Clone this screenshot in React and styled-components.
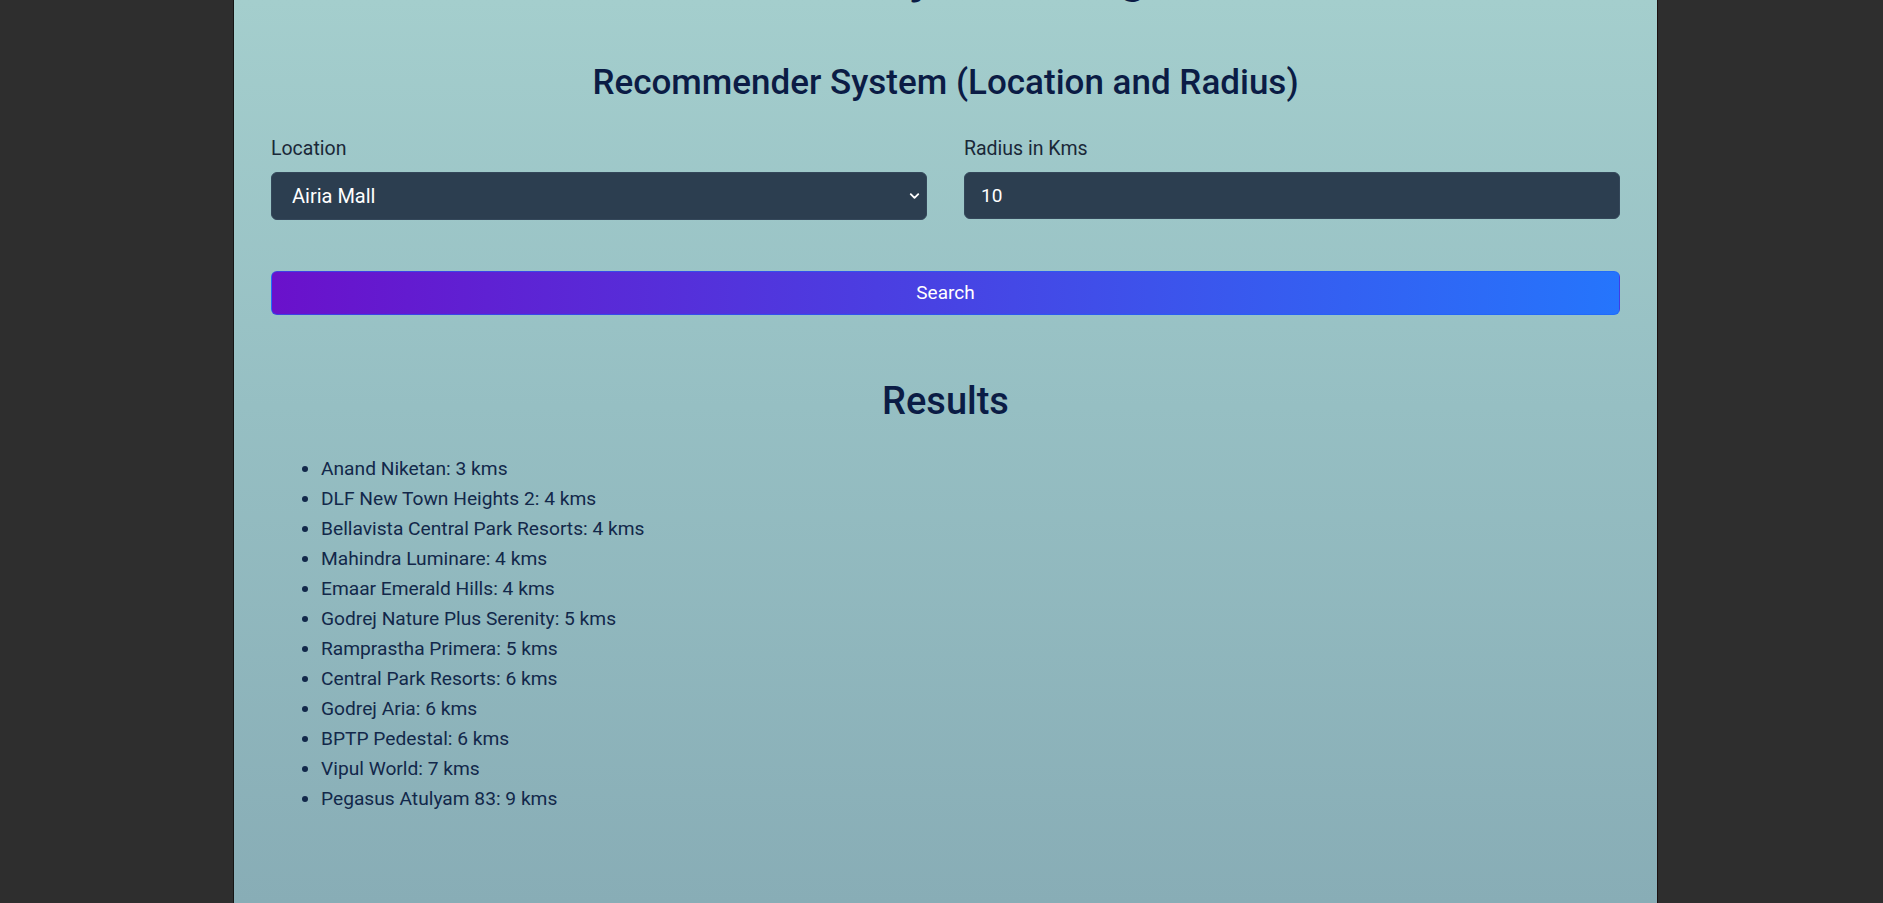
import React from "react";
import styled, { createGlobalStyle } from "styled-components";
import { ChevronDown } from "lucide-react";

const GlobalStyle = createGlobalStyle`
  html, body {
    margin: 0;
    padding: 0;
    background: #2e2e2e;
    overflow: hidden;
  }
  body {
    font-family: Roboto, "Liberation Sans", Arial, sans-serif;
  }
  * { box-sizing: border-box; }
`;

const Page = styled.div`
  display: flex;
  padding-left: 233px;
  min-height: 100vh;
`;

const Panel = styled.main`
  width: 1425px;
  min-height: 100vh;
  border-left: 1px solid #151515;
  border-right: 1px solid #1c1010;
  padding: 0 37px 60px;
  background: linear-gradient(to bottom, #a4cecd 0%, #96bfc3 45%, #88adb6 100%);
  overflow: hidden;
`;

const PageTitle = styled.h1`
  margin: -53px 0 0;
  font-size: 48px;
  line-height: 1.2;
  font-weight: 700;
  text-align: center;
  color: #0b1c45;
`;

const SectionTitle = styled.h2`
  margin: ${(p) => p.$mt} 0 0;
  font-size: ${(p) => p.$size};
  line-height: 1.2;
  font-weight: 500;
  text-align: center;
  color: #0b1c45;
`;

const FormGrid = styled.div`
  display: grid;
  grid-template-columns: 1fr 1fr;
  column-gap: 37px;
  margin-top: 30px;
`;

const Field = styled.div`
  display: flex;
  flex-direction: column;
`;

const Label = styled.label`
  font-size: 19.5px;
  line-height: 30px;
  color: #1a2838;
  margin-bottom: 8px;
`;

const SelectWrap = styled.div`
  position: relative;
`;

const Select = styled.select`
  width: 100%;
  height: 48px;
  appearance: none;
  -webkit-appearance: none;
  background: #2c3e50;
  color: #ffffff;
  border: 1px solid #34475a;
  border-radius: 6px;
  padding: 0 40px 0 20px;
  font-family: inherit;
  font-size: 20px;
  outline: none;
`;

const Chevron = styled.span`
  position: absolute;
  right: 5px;
  top: 50%;
  transform: translateY(-50%);
  display: flex;
  color: #ffffff;
  pointer-events: none;
`;

const Input = styled.input`
  width: 100%;
  height: 47px;
  background: #2c3e50;
  color: #ffffff;
  border: 1px solid #34475a;
  border-radius: 6px;
  padding: 0 16px;
  font-family: inherit;
  font-size: 19px;
  outline: none;
`;

const SearchButton = styled.button`
  display: block;
  width: 100%;
  height: 44px;
  margin-top: 51px;
  border: 1px solid rgba(30, 100, 250, 0.55);
  border-radius: 6px;
  background: linear-gradient(to right, #6a11cb, #2575fc);
  color: #ffffff;
  font-family: inherit;
  font-size: 19px;
  cursor: pointer;
`;

const ResultList = styled.ul`
  margin: 30px 0 0;
  padding-left: 50px;
  list-style: disc;
  color: #12284a;
`;

const ResultItem = styled.li`
  font-size: 19.2px;
  line-height: 30px;
`;

const results = [
  ["Anand Niketan", 3],
  ["DLF New Town Heights 2", 4],
  ["Bellavista Central Park Resorts", 4],
  ["Mahindra Luminare", 4],
  ["Emaar Emerald Hills", 4],
  ["Godrej Nature Plus Serenity", 5],
  ["Ramprastha Primera", 5],
  ["Central Park Resorts", 6],
  ["Godrej Aria", 6],
  ["BPTP Pedestal", 6],
  ["Vipul World", 7],
  ["Pegasus Atulyam 83", 9],
];

export default function App() {
  return (
    <>
      <GlobalStyle />
      <Page>
        <Panel>
          <PageTitle>Estate Analytics Using ML</PageTitle>
          <SectionTitle $size="35px" $mt="57px">
            Recommender System (Location and Radius)
          </SectionTitle>
          <FormGrid>
            <Field>
              <Label htmlFor="loc">Location</Label>
              <SelectWrap>
                <Select id="loc" defaultValue="Airia Mall">
                  <option>Airia Mall</option>
                  <option>Ambience Mall</option>
                  <option>Cyber Hub</option>
                </Select>
                <Chevron>
                  <ChevronDown size={15} strokeWidth={3} />
                </Chevron>
              </SelectWrap>
            </Field>
            <Field>
              <Label htmlFor="rad">Radius in Kms</Label>
              <Input id="rad" type="text" defaultValue="10" />
            </Field>
          </FormGrid>
          <SearchButton>Search</SearchButton>
          <SectionTitle $size="38px" $mt="64px">
            Results
          </SectionTitle>
          <ResultList>
            {results.map(([name, km]) => (
              <ResultItem key={name}>
                {name}: {km} kms
              </ResultItem>
            ))}
          </ResultList>
        </Panel>
      </Page>
    </>
  );
}
